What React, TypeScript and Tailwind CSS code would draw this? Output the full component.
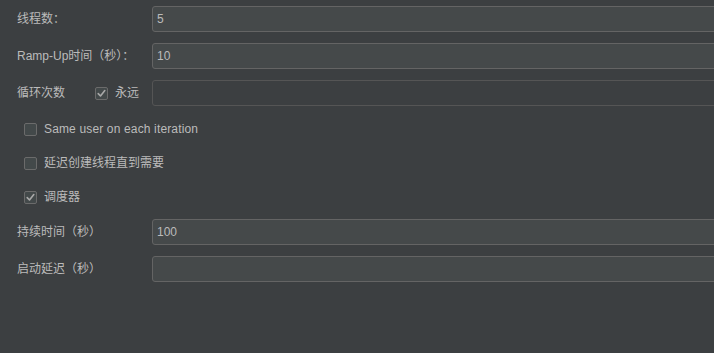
import React from "react";

const Check: React.FC<{ checked?: boolean }> = ({ checked }) => (
  <span className="w-[13px] h-[13px] shrink-0 rounded-[2px] border border-[#6b6b6b] bg-[#43494a] flex items-center justify-center">
    {checked && (
      <svg width="11" height="11" viewBox="0 0 11 11" fill="none">
        <path d="M2.2 5.6 L4.5 8 L8.8 2.6" stroke="#a9a9a9" strokeWidth="1.6" strokeLinecap="round" strokeLinejoin="round" />
      </svg>
    )}
  </span>
);

const Field: React.FC<{ value?: string; disabled?: boolean }> = ({ value, disabled }) => (
  <div
    className={`flex-1 h-[26px] -mr-[6px] rounded-[3px] border flex items-center pl-[4px] text-[12px] ${
      disabled ? "bg-[#3c3f41] border-[#565656]" : "bg-[#45494a] border-[#646464]"
    } text-[#bbbbbb]`}
  >
    {value}
  </div>
);

const InputRow: React.FC<{ label: string; value?: string; className?: string }> = ({ label, value, className }) => (
  <div className={`flex items-center h-[26px] ${className || ""}`}>
    <span className="w-[135px] shrink-0">{label}</span>
    <Field value={value} />
  </div>
);

const CheckRow: React.FC<{ label: string; checked?: boolean; wide?: boolean }> = ({ label, checked, wide }) => (
  <div className="flex items-center h-[34px] pl-[7px] gap-[7px]">
    <Check checked={checked} />
    <span className={wide ? "tracking-[0.15px]" : ""}>{label}</span>
  </div>
);

export default function App() {
  return (
    <div
      className="w-[714px] h-[353px] overflow-hidden bg-[#3c3f41] text-[#bbbbbb] text-[12px] pt-[6px] pl-[17px]"
      style={{ fontFamily: '"Liberation Sans", "Noto Sans CJK SC", sans-serif' }}
    >
      <InputRow label="线程数：" value="5" />
      <InputRow label="Ramp-Up时间（秒）：" value="10" className="mt-[11px]" />
      <div className="flex items-center h-[26px] mt-[11px]">
        <span className="w-[78px] shrink-0">循环次数</span>
        <Check checked />
        <span className="ml-[7px] w-[37px] shrink-0">永远</span>
        <div className="flex-1 h-[26px] -mr-[6px] rounded-[3px] border border-[#555555] bg-[#3c3f41]" />
      </div>

      <div className="mt-[6px]">
        <CheckRow label="Same user on each iteration" wide />
        <CheckRow label="延迟创建线程直到需要" />
        <CheckRow label="调度器" checked />
      </div>

      <InputRow label="持续时间（秒）" value="100" className="mt-[5px]" />
      <InputRow label="启动延迟（秒）" className="mt-[11px]" />
    </div>
  );
}
